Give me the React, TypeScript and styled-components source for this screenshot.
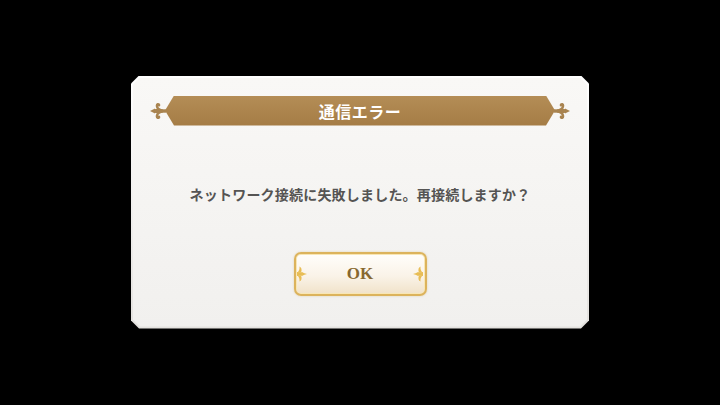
import React from 'react';
import styled, { createGlobalStyle } from 'styled-components';

const GlobalStyle = createGlobalStyle`
  html, body {
    margin: 0;
    padding: 0;
    background: #000;
  }
  body {
    font-family: "Noto Sans CJK JP", "Noto Sans", sans-serif;
  }
`;

// 角を落とした枠
const chamfer = (c: number) =>
  `polygon(${c}px 0, calc(100% - ${c}px) 0, 100% ${c}px, 100% calc(100% - ${c}px), calc(100% - ${c}px) 100%, ${c}px 100%, 0 calc(100% - ${c}px), 0 ${c}px)`;

function Ornament({ flip }: { flip?: boolean }) {
  return (
    <svg
      width="16"
      height="22"
      viewBox="0 0 16 22"
      style={{ transform: flip ? 'scaleX(-1)' : undefined, display: 'block' }}
    >
      <g fill="#a98450">
        <path d="M0 11 L5 8.6 L5 13.4 Z" />
        <rect x="4" y="9.3" width="12" height="3.4" />
        <path d="M8 10 C6 8.5 5.2 6.2 6 4.2 C7 2.2 10.3 2.6 10.3 5 C10.3 6.4 8.8 7 8 6.2 C8.4 7.8 10.5 9 13 9.6 L13 10.5 Z" />
        <path d="M8 12 C6 13.5 5.2 15.8 6 17.8 C7 19.8 10.3 19.4 10.3 17 C10.3 15.6 8.8 15 8 15.8 C8.4 14.2 10.5 13 13 12.4 L13 11.5 Z" />
        <circle cx="6.8" cy="11" r="2.2" />
      </g>
    </svg>
  );
}

function ButtonOrnament({ flip }: { flip?: boolean }) {
  return (
    <svg
      width="10"
      height="18"
      viewBox="0 0 10 18"
      style={{ transform: flip ? 'scaleX(-1)' : undefined, display: 'block' }}
    >
      <g fill="#e8bd55">
        <path d="M0 7 L5 7.6 L10 9 L5 10.4 L0 11 Z" />
        <path d="M0.5 7.5 C2 6 3 3.5 2.4 1.5 C4.6 2.2 5.2 5 4 7.6 Z" />
        <path d="M0.5 10.5 C2 12 3 14.5 2.4 16.5 C4.6 15.8 5.2 13 4 10.4 Z" />
        <circle cx="5" cy="9" r="1.8" />
      </g>
    </svg>
  );
}

export default function App() {
  return (
    <>
      <GlobalStyle />
      <Screen>
        <Frame>
          <Panel>
            <TitleRow>
              <Ornament />
              <TitleBand>通信エラー</TitleBand>
              <Ornament flip />
            </TitleRow>
            <Message>ネットワーク接続に失敗しました。再接続しますか？</Message>
            <OkButton>
              <ButtonOrnament />
              <span>OK</span>
              <ButtonOrnament flip />
            </OkButton>
          </Panel>
        </Frame>
      </Screen>
    </>
  );
}

const Screen = styled.div`
  width: 720px;
  height: 405px;
  display: flex;
  align-items: center;
  justify-content: center;
  background: #000;
`;

const Frame = styled.div`
  width: 458px;
  height: 253px;
  margin-top: -1px;
  padding: 2px;
  box-sizing: border-box;
  background: linear-gradient(180deg, #ffffff 0%, #e4e2df 100%);
  clip-path: ${chamfer(8)};
`;

const Panel = styled.div`
  width: 100%;
  height: 100%;
  box-sizing: border-box;
  padding: 18px 17px 0;
  display: flex;
  flex-direction: column;
  align-items: center;
  background: linear-gradient(180deg, #f9f8f6 0%, #f1f0ee 100%);
  clip-path: ${chamfer(7)};
`;

const TitleRow = styled.div`
  width: 100%;
  height: 30px;
  display: flex;
  align-items: center;
`;

const TitleBand = styled.div`
  flex: 1;
  height: 30px;
  margin: 0 -1px;
  display: flex;
  align-items: center;
  justify-content: center;
  background: linear-gradient(180deg, #b48d56 0%, #a57c45 100%);
  clip-path: polygon(9px 0, calc(100% - 9px) 0, 100% 50%, calc(100% - 9px) 100%, 9px 100%, 0 50%);
  color: #fff;
  font-size: 16px;
  font-weight: 700;
  letter-spacing: 0.5px;
`;

const Message = styled.p`
  margin: 58px 0 0;
  font-size: 14px;
  line-height: 20px;
  font-weight: 700;
  color: #555453;
  letter-spacing: 0.2px;
`;

const OkButton = styled.button`
  margin-top: 48px;
  width: 133px;
  height: 44px;
  box-sizing: border-box;
  padding: 0 1px;
  display: flex;
  align-items: center;
  justify-content: space-between;
  border: 2px solid #dcb35c;
  border-radius: 7px;
  background: linear-gradient(180deg, #fffefb 0%, #faf3e8 55%, #f1e2c9 100%);
  box-shadow: inset 0 0 0 1px #f8e6b4, 0 0 2px rgba(200, 160, 80, 0.45);
  cursor: pointer;
  span {
    font-family: "Liberation Serif", "Noto Serif", serif;
    font-size: 17px;
    font-weight: 700;
    color: #87672f;
  }
`;
